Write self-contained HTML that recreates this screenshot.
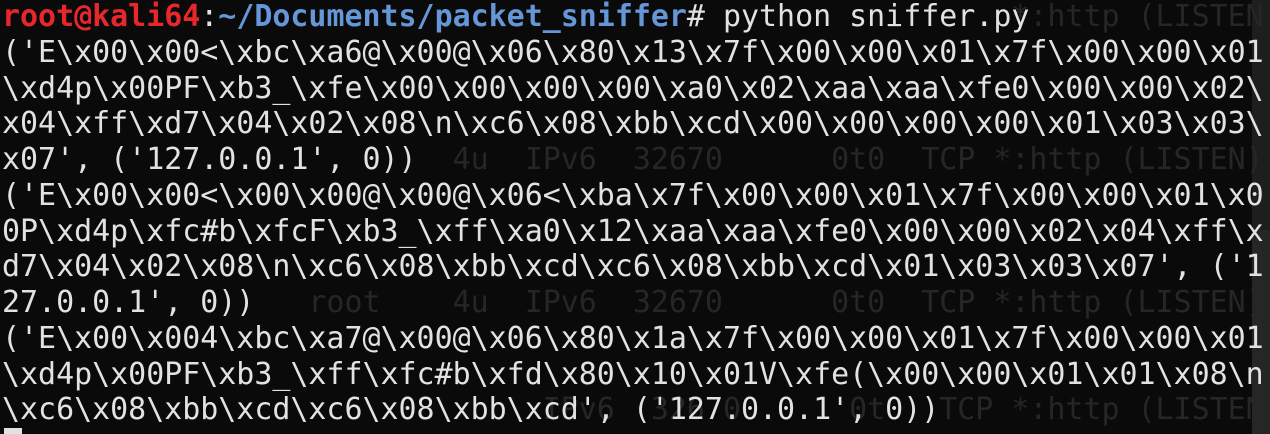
<!DOCTYPE html>
<html><head><meta charset="utf-8"><style>
html,body{margin:0;padding:0;background:#0a0a0a;width:1270px;height:434px;overflow:hidden;position:relative}
.l{position:absolute;left:2px;white-space:pre;font-family:"DejaVu Sans Mono","Liberation Mono",monospace;font-size:29.95px;line-height:35.75px;height:35.75px;color:#e2e2e2}
.g{color:#262626}
.r{color:#e8272b;font-weight:bold}
.b{color:#6496d8;font-weight:bold}
#sb{position:absolute;left:1252px;top:0;width:18px;height:434px;background:#1e1e1e}
#sb2{position:absolute;left:1252px;top:230px;width:18px;height:204px;background:#262626}
#cur{position:absolute;left:4px;top:428px;width:18px;height:6px;background:#e2e2e2}
</style></head><body>
<div id="sb"></div><div id="sb2"></div>
<div class="l g" style="top:-1px">                                                        *:http (LISTEN)</div>
<div class="l g" style="top:141.75px">                         4u  IPv6  32670      0t0  TCP *:http (LISTEN)</div>
<div class="l g" style="top:284.75px">                 root    4u  IPv6  32670      0t0  TCP *:http (LISTEN)</div>
<div class="l g" style="top:392px">                              IPv6  32670      0t0  TCP *:http (LISTEN)</div>
<div class="l" style="top:-1px"><span class="r">root@kali64</span>:<span class="b">~/Documents/packet_sniffer</span># python sniffer.py</div>
<div class="l" style="top:34.75px">('E\x00\x00&lt;\xbc\xa6@\x00@\x06\x80\x13\x7f\x00\x00\x01\x7f\x00\x00\x01</div>
<div class="l" style="top:70.5px">\xd4p\x00PF\xb3_\xfe\x00\x00\x00\x00\xa0\x02\xaa\xaa\xfe0\x00\x00\x02\</div>
<div class="l" style="top:106.25px">x04\xff\xd7\x04\x02\x08\n\xc6\x08\xbb\xcd\x00\x00\x00\x00\x01\x03\x03\</div>
<div class="l" style="top:142px">x07', ('127.0.0.1', 0))</div>
<div class="l" style="top:177.75px">('E\x00\x00&lt;\x00\x00@\x00@\x06&lt;\xba\x7f\x00\x00\x01\x7f\x00\x00\x01\x0</div>
<div class="l" style="top:213.5px">0P\xd4p\xfc#b\xfcF\xb3_\xff\xa0\x12\xaa\xaa\xfe0\x00\x00\x02\x04\xff\x</div>
<div class="l" style="top:249.25px">d7\x04\x02\x08\n\xc6\x08\xbb\xcd\xc6\x08\xbb\xcd\x01\x03\x03\x07', ('1</div>
<div class="l" style="top:285px">27.0.0.1', 0))</div>
<div class="l" style="top:320.75px">('E\x00\x004\xbc\xa7@\x00@\x06\x80\x1a\x7f\x00\x00\x01\x7f\x00\x00\x01</div>
<div class="l" style="top:356.5px">\xd4p\x00PF\xb3_\xff\xfc#b\xfd\x80\x10\x01V\xfe(\x00\x00\x01\x01\x08\n</div>
<div class="l" style="top:392.25px">\xc6\x08\xbb\xcd\xc6\x08\xbb\xcd', ('127.0.0.1', 0))</div>
<div id="cur"></div>
</body></html>
